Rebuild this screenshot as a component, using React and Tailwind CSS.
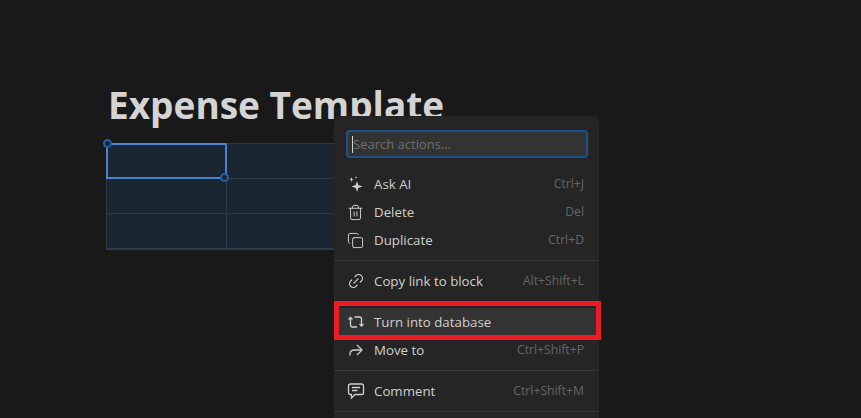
import React from 'react';
import { Trash2, Copy, Link2 } from 'lucide-react';

const SparkIcon = () => (
  <svg width="18" height="18" viewBox="0 0 18 18" fill="currentColor">
    <path d="M10 6 L11.3 10 L15.5 11.5 L11.3 13 L10 17 L8.7 13 L4.5 11.5 L8.7 10 Z" />
    <path d="M4.5 2 L5.1 3.9 L7 4.5 L5.1 5.1 L4.5 7 L3.9 5.1 L2 4.5 L3.9 3.9 Z" />
    <circle cx="9" cy="2.5" r="0.8" />
  </svg>
);

const TurnIcon = () => (
  <svg width="18" height="18" viewBox="0 0 18 18" fill="none" stroke="currentColor" strokeWidth="1.3">
    <path d="M1.5 6.5 L3.5 4.5 L5.5 6.5" />
    <path d="M3.5 5 V12 Q3.5 14 5.5 14 H10" />
    <path d="M16.5 11 L14.5 13 L12.5 11" />
    <path d="M14.5 12.5 V6 Q14.5 4 12.5 4 H7.5" />
  </svg>
);

const MoveIcon = () => (
  <svg width="18" height="18" viewBox="0 0 18 18" fill="none" stroke="currentColor" strokeWidth="1.3">
    <path d="M3 14.5 V13 Q3 9 7.5 9 H14.5" />
    <path d="M10 4 L15 9 L10 14" />
  </svg>
);

const CommentIcon = () => (
  <svg width="18" height="18" viewBox="0 0 18 18" fill="none" stroke="currentColor" strokeWidth="1.3">
    <path d="M3.5 2 H14.5 Q16.5 2 16.5 4 V10.5 Q16.5 12.5 14.5 12.5 H8 L4.5 16 V12.5 H3.5 Q1.5 12.5 1.5 10.5 V4 Q1.5 2 3.5 2 Z" />
    <path d="M5 5.5 H13 M5 8.5 H10.5" />
  </svg>
);

const Row = ({ icon, label, keys }) => (
  <div className="h-7 flex items-center justify-between pl-[12px] pr-[15px]">
    <div className="flex items-center gap-[9px] text-[#cfcfcf]">
      <span className="w-[19px] flex justify-center">{icon}</span>
      <span className="text-[13.3px] mt-px">{label}</span>
    </div>
    <span className="text-[12.2px] text-[#666666]">{keys}</span>
  </div>
);

const Divider = () => <div className="h-px bg-[#383838] my-[6px]" />;

export default function App() {
  const cells = [0, 1, 2, 3, 4, 5, 6, 7, 8];

  return (
    <div className="relative w-[861px] h-[418px] overflow-hidden bg-[#191919] font-['Open_Sans',sans-serif]">
      <div className="pl-[106px] pt-[80px]">
        <h1 className="text-[37px] leading-[50px] font-bold text-[#d4d4d4] ml-[2px]">Expense Template</h1>
        <div className="relative mt-[13px] w-[362px] grid grid-cols-[120px_120px_120px] border border-[#2e3a47] bg-[#1a2733]">
          {cells.map((c) => (
            <div key={c} className="h-[35px] border-r border-b border-[#2e3a47]" />
          ))}
          <div className="absolute -left-px -top-px w-[121px] h-[36px] border-2 border-[#4a82cf]" />
          <div className="absolute -left-[4px] -top-[5px] w-[9px] h-[9px] rounded-full border-2 border-[#25609f] bg-[#1a2733]" />
          <div className="absolute left-[113px] top-[29px] w-[9px] h-[9px] rounded-full border-2 border-[#25609f] bg-[#1a2733]" />
        </div>
      </div>

      <div className="absolute left-[334px] top-[116px] w-[265px] h-[320px] bg-[#252525] rounded-md">
        <div className="ml-3 mr-[11px] mt-[14px] mb-[12px] h-7 rounded bg-[#333333] border-2 border-[#1f5288] flex items-center pl-[4px] text-[13px]">
          <span className="w-px h-[17px] bg-[#d4d4d4]" />
          <span className="text-[#6f6f6f] mt-px">Search actions...</span>
        </div>
        <Row icon={<SparkIcon />} label="Ask AI" keys="Ctrl+J" />
        <Row icon={<Trash2 size={17} strokeWidth={1.4} />} label="Delete" keys="Del" />
        <Row icon={<Copy size={17} strokeWidth={1.4} />} label="Duplicate" keys="Ctrl+D" />
        <Divider />
        <Row icon={<Link2 size={18} strokeWidth={1.6} className="-rotate-45" />} label="Copy link to block" keys="Alt+Shift+L" />
        <Divider />
        <div className="bg-[#333333]">
          <Row icon={<TurnIcon />} label="Turn into database" keys="" />
        </div>
        <Row icon={<MoveIcon />} label="Move to" keys="Ctrl+Shift+P" />
        <Divider />
        <Row icon={<CommentIcon />} label="Comment" keys="Ctrl+Shift+M" />
        <Divider />
      </div>

      <div className="absolute left-[334px] top-[301px] w-[267px] h-[39px] border-[5px] border-[#ed1c24]" />
    </div>
  );
}
